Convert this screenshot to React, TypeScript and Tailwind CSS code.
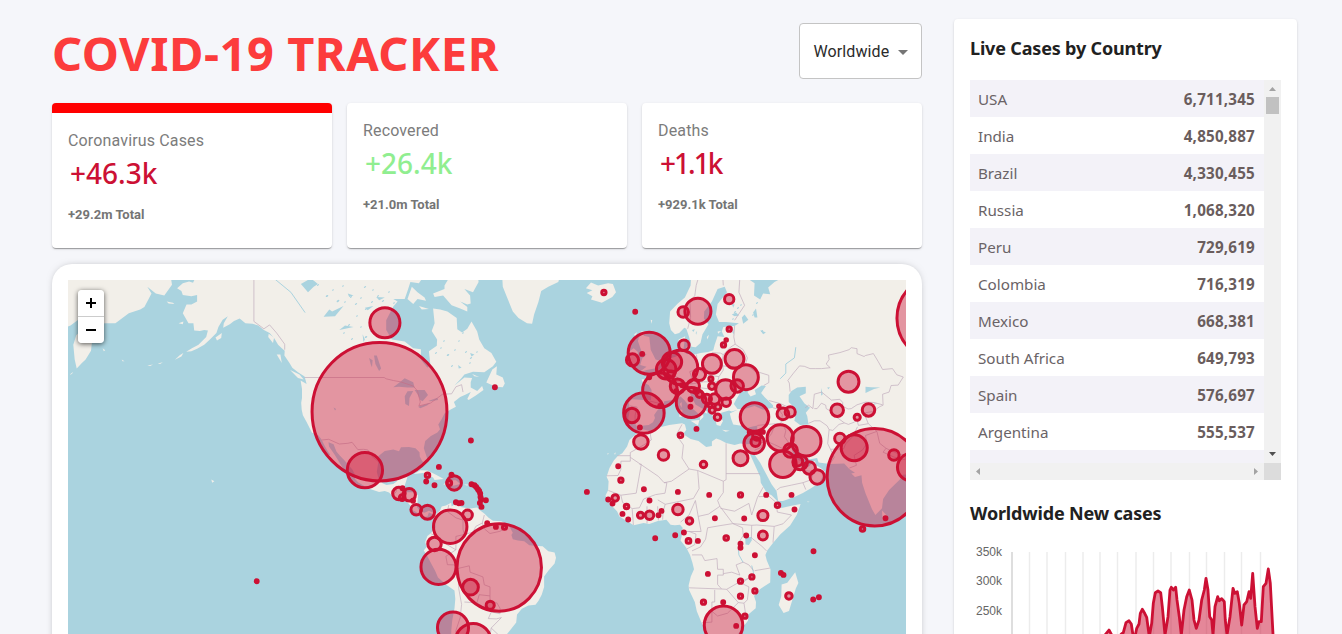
import React from "react";

type Pt = [number, number];

const project = (lng: number, lat: number): Pt => {
  const s = Math.sin((lat * Math.PI) / 180);
  return [655 + 2.8444 * lng, 537.8 - 81.49 * Math.log((1 + s) / (1 - s))];
};

const toPath = (coords: string, close = true) =>
  "M" +
  coords
    .trim()
    .split(/\s+/)
    .map((c) => {
      const [a, b] = c.split(",").map(Number);
      const [x, y] = project(a, b);
      return x.toFixed(1) + " " + y.toFixed(1);
    })
    .join("L") +
  (close ? "Z" : "");

const LAND = [
  // Americas
  "-164,69 -163.8,67.1 -161.8,66.9 -162.5,66.3 -161,66.2 -163.8,66.55 -166,66.3 -168,65.6 -166.5,65.2 -166,64.6 -163,64.4 -161,64.6 -161,63.6 -163,63.1 -164.7,63.1 -166,61.7 -165.3,61.1 -164,60 -162.3,60 -162,58.7 -160,58.6 -158.5,58.8 -157.2,58.7 -157.8,57.5 -160.5,56 -162.8,55.3 -164.8,54.6 -163,54.7 -161,55.2 -158.5,56 -156.5,57 -154.2,58.2 -153.5,59.3 -152,60.6 -150.2,61.2 -151.6,60 -151.8,59.2 -149.5,59.8 -148,60.4 -146,60.8 -144,60 -141.5,59.9 -139.5,59.6 -137.5,58.8 -135.5,58.2 -133.8,57.2 -132.5,56 -131.2,55.3 -130.2,54.8 -130.3,53.8 -128.5,52.2 -127.5,51.2 -125.5,50.2 -123.2,49.2 -122.5,47.5 -124.6,48.3 -124.1,46.3 -124.1,44 -124.4,42.8 -124.2,41 -123.8,39.5 -122.5,37.7 -121.8,36.5 -120.6,34.6 -118.4,33.9 -117.2,32.6 -116,30.5 -115,29 -114.2,28 -114.9,27.8 -113.5,26.8 -112.2,25 -110.3,23.3 -109.5,23.1 -110,24.2 -111.2,26 -112.8,28.2 -114.6,30.5 -114.8,31.8 -113,31.2 -112,29 -110.8,27.8 -109.3,26.4 -108,25 -106.4,23.3 -105.4,21.5 -105.5,20.3 -104.3,19.1 -102.2,17.9 -99.9,16.8 -97,15.9 -95,16.2 -93.5,15.7 -92.2,14.5 -90.5,13.8 -88,13.2 -87.3,12.7 -85.8,11 -85.7,9.9 -84,9 -83,8.2 -81.5,7.4 -80,7.5 -79.5,8.9 -78.3,8.3 -77.5,7 -77.3,5 -77.1,3.7 -78.8,1.6 -80,0.6 -80.8,-1.5 -80.3,-3.2 -81.3,-4.5 -80,-6.5 -78.8,-8.8 -77.3,-11.5 -76.3,-13.8 -73.5,-16.2 -70.5,-18.2 -70.2,-21 -70.5,-24 -71.3,-28 -71.6,-31 -71.7,-35 -57,-36 -58.4,-34 -54.5,-34.8 -53.5,-33.5 -51,-31 -48.8,-28.5 -48.5,-26 -46.8,-24.2 -44.5,-23.1 -42,-22.9 -40.9,-21.5 -39.8,-19.5 -39,-17 -39,-13.5 -37.5,-11.5 -35.3,-9 -34.8,-7 -35.3,-5.2 -37.5,-4.7 -39.5,-3 -41.5,-2.9 -44.2,-2.6 -46,-1.2 -48.2,-0.9 -50,-0.5 -50.5,1 -50,1.8 -51.2,4 -52.5,5 -54,5.8 -57,6 -58.5,7 -60,8.5 -61.8,9.8 -62.5,10.6 -65,10.2 -68,10.7 -70,12 -71.5,10.9 -71.6,12.2 -73.5,11.3 -75,10.9 -75.6,9.6 -76.9,8.4 -77.5,8.6 -79.5,9.5 -81,8.8 -82.5,9.2 -83.7,10.8 -83.5,12.5 -83.3,14.8 -84.5,15.8 -86.5,15.8 -88.5,15.8 -88.2,17.5 -87.5,19.5 -86.9,21.3 -88.5,21.5 -90.3,21 -90.7,19.5 -92,18.6 -94.4,18.2 -95.8,18.8 -97.3,20.8 -97.8,22.5 -97.3,25.5 -97.2,27.6 -95,29.2 -92,29.6 -90,29.1 -89.3,30.3 -86.5,30.4 -84.2,30 -82.8,28.8 -82.7,27.5 -81.8,26 -80.5,25.2 -80.1,26.8 -81.3,30 -80.8,32.2 -78.8,33.7 -76.5,34.7 -75.6,35.6 -76.2,37 -75,38.5 -74,40 -72,41 -70,41.8 -70.7,43 -68.5,44.3 -66.5,44.9 -64.8,45.5 -66,43.8 -65.5,43.5 -63,44.7 -60.3,46 -60.8,47 -62.5,45.8 -64.8,46.6 -64.8,47.9 -64.3,48.9 -67,49 -70.5,47.1 -68,48.9 -67,49.7 -64,50.3 -60,50.2 -57,51.5 -55.8,52.5 -57.5,54.3 -60,55.3 -61.8,57 -62.5,58.5 -64.5,60.3 -66,59 -67.8,58.3 -69.5,58.9 -69.7,60.9 -73,62 -75.5,62.3 -78,62.5 -77.5,60 -78.5,58.6 -76.6,57 -76.7,55.8 -79.5,54.7 -79,52 -80,51.2 -82.3,53 -82.3,55.1 -85,55.3 -88,56.6 -92.5,57 -94.5,58.8 -94.5,60.5 -92,62.8 -90.5,63.6 -92,64 -88,64 -87,65.2 -86,66.5 -83,66.3 -81.5,67.2 -82,69",
  "-73,69 -72.5,67 -74,66 -74,65.5 -78,64.8 -77.5,64.3 -74.5,64.5 -71.5,63 -68.5,62.5 -66,62 -66,62.7 -68.5,63.6 -66,63.1 -64.8,63.3 -65,64.5 -67,65.5 -64,65 -62,66.5 -63,69",
  "-87,64 -85.5,65.8 -83.5,65 -81,64.2 -80.5,63.7 -83.5,64 -85,63.2",
  "-79.5,62.4 -83,62.9 -82,62.3",
  "-54,69 -53.7,67 -53.5,65.8 -52,64.2 -50,62 -48,60.9 -45,60 -43.2,59.9 -42.5,61.5 -41,63.5 -40,65.2 -37.5,65.8 -34,66.5 -32,69",
  "-22.5,63.9 -18.7,63.4 -15,64.3 -13.7,65 -14.8,66.2 -16.5,66.3 -20,66 -22.5,66.4 -24.3,65.6 -22,65.3 -24,64.9 -22,64.4",
  "-59.3,47.8 -56,46.8 -53.5,46.7 -52.8,47.6 -53.5,49 -55.8,49.7 -55.6,51.5 -57.2,50.8",
  "-64.3,49.8 -61.8,49.1 -63.5,49.3",
  "-84.8,21.9 -82.5,23.1 -80,23 -77,21.6 -74.3,20.2 -77.5,19.9 -78,20.7 -81.5,22.2",
  "-74.4,18.4 -72.7,19.8 -70,19.8 -68.4,18.6 -71,18",
  "-78.3,18.4 -76.3,18.1 -77.2,17.8",
  "-67.2,18.4 -65.7,18.4 -66,18",
  "-128.3,50.7 -125,49.7 -123.5,48.5 -125.5,48.9",
  "-133,54 -131.7,54 -131.2,52.2",
  "-135.8,58.1 -133.9,57.4 -134.3,56.3 -136,57.5",
  "-154.5,57.4 -152.3,58.2 -152.5,57.3 -154,56.8",
  "-167.5,60 -165.8,60.3 -166,59.8",
  "-171.7,63.6 -169.5,63.4 -169,63.2 -171,63.3",
  "-167,53.9 -165.8,54.3 -166.5,53.6 -168.8,52.9",
  "-174.8,52.1 -173,52.4 -174,52",
  "-178.5,51.7 -176.5,51.9 -177.5,51.6",
  "-187.5,53 -186.5,52.6 -187.2,52.6",
  "-194.2,55.3 -193.3,54.9 -193.8,54.7",
  "-156,20.1 -154.9,19.5 -155.7,19",
  // Eastern Siberia
  "-171,69 -169.8,66.1 -172.5,64.5 -175.5,64.8 -178.5,65.8 -177,64.8 -179.5,62.7 -181,62.3 -185,61.7 -189.7,60 -193,60 -195.8,59.9 -197,58.2 -196.5,57.8 -198,56.2 -198.3,54.8 -200.2,53 -201.5,52.2 -203.3,51 -204,53 -204.5,56 -203.5,57.8 -200,59.5 -197,61.2 -200,61.4 -203,60.5 -205.5,59.6 -208,59 -208,69",
  "-204.5,50.3 -205.8,49.6 -205,49.8",
  // Eurasia and Africa
  "13,69 12.5,66 10.5,64.2 8,63.3 5.3,62 5,60 5.6,58.8 7,58 8.5,58.2 10.3,59.2 11,59 12,57.5 12.8,55.6 14.3,55.5 16,56.3 16.7,58 18.8,59.8 17.2,60.8 17.3,62 20,63.6 22,65.5 24.5,65.8 25.3,65 22,63.2 21.4,61.5 22.5,60.2 25,60.2 29.5,60 28,59.5 24,59.3 23.5,58.5 24.4,57.5 22,57.6 21,56 20.5,54.9 18.7,54.5 16,54.3 14,54 11,54.1 10,55 10.6,57.6 8.3,57 8.3,55 8.7,53.9 7,53.5 5,53.2 4,51.8 1.7,50.9 0.2,49.6 -1.3,49.6 -1.5,48.7 -4.7,48.5 -4.3,47.9 -2.2,47.2 -1.2,46 -1.4,43.5 -4,43.5 -8,43.7 -9.2,43 -8.8,41 -9.4,38.8 -8.8,37.1 -7,37.1 -6,36.2 -5.4,36.1 -4,36.7 -2.2,36.8 -0.7,37.6 0,38.8 -0.3,39.6 1,41 3.1,42 3.2,43.2 5,43.4 7.5,43.8 9,44.4 10.3,43.5 12,42 14,40.8 16,39.4 15.7,38 17,39 16.8,40.5 18.4,39.9 18.3,40.5 16,41.6 14.2,42.4 13.3,43.7 12.3,45.2 13.7,45.5 14,45 15.3,44.3 18.4,42.4 19.5,41.3 19.4,40.3 21.2,38.3 21.7,36.8 23,36.5 23.9,37.9 22.8,39.3 23.3,40.2 26,40.8 27,40.5 29,41 26.3,40 26.8,38.5 27.5,37 30.5,36.6 32.5,36 34,36.3 36,36.7 35.8,35 35,33 34.3,31.3 32,31.2 30,31.4 28,31 25,31.6 23,32.5 21.5,32.9 20,32 20,30.7 18,30.4 15.3,32.2 12.5,32.8 10.5,33.9 10.2,34.5 11,35.5 10.5,37 9.5,37.3 5,36.8 0,35.8 -2,35.1 -5.3,35.8 -6.5,34.3 -9,32.5 -9.8,30.5 -11.5,28.5 -13,27.7 -14.5,26.2 -16,23.8 -17,21 -16.3,19.5 -16.5,16.5 -17.4,14.7 -16.7,13 -15,11 -13.3,9.2 -12.5,7.5 -9.5,5.6 -7.5,4.4 -4,5.2 -2,4.8 1,5.9 4,6.3 5.5,4.6 7,4.4 8.8,4.6 9.7,3.5 9.5,1 9,-1 11,-3.5 12.3,-6 13.2,-8.8 13.7,-11 12.6,-13.5 11.8,-16.5 12,-18 14,-22 14.7,-25 16.4,-28.6 18.2,-32 18.4,-34.3 20,-34.8 25,-34 28.5,-32.8 31,-29.8 32.7,-28 32.8,-26 35.4,-24 35.5,-22 34.8,-20 37,-17.7 40.5,-15.5 40.6,-11 39.3,-8 38.8,-6 39.5,-4.4 41.5,-1.8 44,1.2 47.5,4.3 49.8,8 51.2,11.8 48,11.2 44.5,10.4 43,11.6 43.2,12.6 41,14.8 39.3,15.6 37.2,19 37,21 35.5,24 34,27 32.5,29.9 34.2,27.8 34.9,29.4 35,28 37,25.5 39,22 41,18.5 42.7,16.2 43.3,12.8 45,12.8 49,14.2 52,15.6 55,17.2 57.8,19 59.8,22.5 58.5,23.7 56.5,24.8 56.3,26.2 54,24.2 51.5,24.2 51.3,26 50,26.5 48.5,28.5 48,30 50,30.2 51.5,27.9 54.5,26.6 57,27 57.5,25.6 61.5,25.1 66.5,25.3 68.3,23.5 70.3,22.3 69,22 70.3,20.9 72.6,21.5 72.8,19 74,15.5 76.3,10 77.5,8 79.8,10.3 80.2,13.5 82.3,16.6 86,20 87.2,21.6 89,21.8 92,22 92,69",
  "-5.7,50.1 -3,50.7 1.3,51.2 1.7,52.7 0.2,53 -1.5,55 -2,57.5 -4,57.7 -3.2,58.6 -5,58.5 -6,56.7 -4.8,54.8 -3,54 -4.5,53.2 -5.2,51.8 -3,51.4",
  "-10,51.6 -6.3,52.2 -6,54.5 -7.5,55.3 -10,54.2 -9,53",
  "-7.3,58 -6.2,58.4 -7,57.6",
  "-1.5,60.6 -1,60.5 -1.2,59.9",
  "11,55.6 12.5,56 12.3,55 11.2,55.2",
  "18.2,57.5 19,57.9 18.5,57",
  "22,58.5 23.2,58.6 22.2,58.1",
  "8.3,41 9.6,41 9.6,39.2 8.6,39",
  "8.7,42.5 9.4,43 9.4,41.5",
  "12.5,38 15.6,38.2 15.1,36.7",
  "23.6,35.5 26.3,35.2 24.8,34.9",
  "32.3,35 34.5,35.6 33.7,34.7",
  "2.5,39.7 3.4,39.7 3,39.3",
  "79.8,9.6 81.8,7.5 81.2,6.2 80,6.2",
  "49.3,-12 50.4,-15.7 49.5,-17.5 47.1,-24.9 45.2,-25.5 43.5,-23 44.4,-20 44.5,-16.2 46.5,-15.6",
  "53.4,12.7 54.4,12.6 53.8,12.4",
  "-14.4,28.2 -13.8,28.8 -14,28.1",
  "-16.8,28.4 -16.2,28.5 -16.6,28",
];

const WATER = [
  "-92,46.7 -89.5,48 -88,48.8 -85,47.9 -84.5,46.6 -87,46.6 -90,46.8",
  "-87.8,42.5 -86.5,42 -86.3,44 -85,45.8 -87,45.7 -88,44.5",
  "-84.5,46 -81,46 -79.8,44.8 -81.7,43.2 -82.5,43.5 -83.5,45",
  "-83.3,41.8 -79,42.8 -80,42.2 -82.5,41.4",
  "-79.7,43.3 -76.5,44.1 -76.3,43.5 -79,43.2",
  "-98.8,53.8 -97.8,53.8 -96.3,51 -97,50.5 -98.3,52",
  "-100.5,53.3 -99.3,52.8 -99.5,51.3 -100,52",
  "-116.5,61.1 -114.5,62.3 -113.5,62 -109.5,62.9 -112.5,61.2",
  "-124.5,66.2 -121,67 -118.5,66.2 -120,65.8 -122,65",
  "-111,58.8 -106,59.3 -109,59.6",
  "-102.8,58 -102,57 -102.5,56.5",
  "-102,62.6 -99,62.9 -101,62.2",
  "-98,64.3 -95,64.2 -97,63.8",
  "-108,64.8 -106,64.5 -107.5,64.3",
  "-65,54.3 -63.5,54 -64.5,53.6",
  "-69.2,51.8 -68,51.2 -69,51",
  "-113,41.6 -112.1,41.2 -112.5,40.8",
  "27.7,42.5 28.6,43.7 29.7,45.1 31,46.6 33,46 32.6,45.4 33.6,44.4 35.5,45 35,46 37.5,47.1 39,47 37.3,45.3 38.5,44.3 41.5,42.2 41.5,41.5 38,41 35,42 31.3,41.2 29,41.2",
  "47,44.8 47,43 48.7,41.8 49.5,40.3 49,38 51,36.8 54,37 53.5,39.3 53,40.2 54.5,41.5 52.5,42.7 50.8,44.5 53,45.2 53,46.8 50,46.6 48,45.8",
  "33,67.5 32.5,67 35,66.3 34.8,64.5 37,63.9 38,64.8 40.5,64.7 39.8,65.7 42,66.5 44.5,67 44,68",
  "30.5,61 31.5,61.5 32.8,60.6 31,59.9",
  "34.5,61.8 35.5,62.5 36,61 35,61",
  "27.5,59 27.8,58 27.2,58.3",
  "37,58.8 39,58.3 38,58",
  "74,46.8 76,46.7 79.2,46.6 77,46.3 74,45.3",
  "58.4,46.5 59,45 58.4,44.6",
  "60.5,46.6 61.5,46.7 61,46.2",
  "31.7,0.2 34,0.3 34,-1 33,-2.5 31.8,-2.4",
  "77,42.6 78.2,42.6 77,42.3",
  "13,58.8 14,58.9 13.5,58.4",
  "14.3,58.2 14.8,58.6 14.5,57.9",
  "27,61.5 28.5,61.8 29.5,61.3 28,61.2",
  "27,63.2 28,63.1 27.5,62.6",
  "81,69 83,66.8 84,66.8 82,69",
];

// Small lakes: x, y, radius
const LAKES = `314,283,1.2 318,285,.9 327,296,1.1 333,290,.8 338,301,1.2 345,302,.8 351,297,.9 356,304,1 361,298,.8 366,309,1
372,302,.9 357,316,.8 349,325,1 344,333,.8 352,339,.9 366,337,1.1 371,331,.8 361,327,.7 378,296,.9 383,301,1 389,292,.8 394,303,.8
365,287,1 373,290,.7 343,286,.8 436,353,.9 441,348,.7 448,355,1.1 455,350,.8 459,341,.7 466,352,.9 471,358,1 463,333,.8 470,363,.8
452,366,.9 444,341,.8 477,352,.7 716,299,.9 735,312,1 738,308,.9 733,319,.8 741,305,.8 757,303,.9 762,331,1 753,315,.8`
  .trim()
  .split(/\s+/)
  .map((s) => s.split(",").map(Number));

const RIVERS = [
  "29.3,-3.5 29.5,-6 31,-8.7",
  "34,-9.7 34.6,-12 35,-14.3",
  "44,48.7 46,50 46,52 49,53.3 49.5,55.5",
  "-134,67 -128,65 -123,61.8",
];

const BORDERS = [
  "-141,69 -141,60.3 -137.5,59 -135.5,59.7 -133,58.2 -130.2,56.1 -130.2,55",
  "-123.2,49 -95.2,49 -94.5,48.7 -92,48.3 -89.5,48 -85,47 -83.5,45.8 -82.5,43 -83,42 -79,42.7 -76.5,44 -74.7,45 -71.5,45.1 -70,46.8 -68,47.3 -67.5,45.5",
  "-117.1,32.5 -114.7,32.7 -111,31.3 -108,31.5 -106.5,31.8 -104.5,29.6 -102.5,29.7 -101,29.5 -99.5,27.5 -97.3,25.9",
  "-92.2,14.6 -91,16 -91,17.8 -89.2,17.8",
  "-72.5,11.5 -73,9.2 -70,7 -67.5,6.2 -67.5,3 -67,1.2 -70,0.5 -70,-4.2 -73,-2.5 -75.5,0 -78.7,1.4",
  "-67,1.2 -64,2 -63,4 -60.7,5.2 -60,8",
  "-60.7,5.2 -59.8,3 -58,1.5 -54.5,2.3 -51.6,4",
  "-70,-4.2 -73.5,-6.5 -73,-9.4 -70.5,-9.5 -69.5,-11 -68.8,-13 -69,-17.5 -68,-22.8 -68.5,-27 -70,-31 -70,-35",
  "-70.5,-11 -65.3,-9.8 -65,-12 -60.5,-13.6 -60,-16.3 -58,-17 -58,-20 -61.8,-19.6 -62.6,-22.3 -67,-22",
  "-58,-20 -58,-22 -55.6,-22.3 -54.5,-24 -54.5,-25.8 -57.5,-25.2 -62.6,-22.3",
  "-57.6,-25.3 -58.6,-27.3 -55.8,-27.4 -54,-27 -57.6,-30.2 -58.2,-33.5",
  "-57.6,-30.2 -53.5,-33.5",
  "-13.2,27.7 -8.7,27.7 -8.7,26 -12,26 -12,23.4 -13,21.4 -17,21.3",
  "-8.7,27.7 -8.7,28.7 -4,31 -1.3,32.5 -1.8,35",
  "-8.7,27.2 1.2,21.1 3.2,19 5.8,19.5 12,23.5 15,23 24,19.5 25,20 25,31.5",
  "9.5,37 7.5,34 10,31 9.5,27 12,23.5",
  "-5.5,25 -4.8,25 -6.6,15.5 -12,14.8 -16.4,16.4",
  "3.2,19 4.2,19 3.5,15.5 0.2,15 -4,13.5 -5.5,10.5 -8,10.2 -11.4,12.3 -12,14.8",
  "15,23 15.5,17 13.5,13.7 3.6,11.7 1,13.2",
  "3.6,11.7 2.8,9 2.7,6.4",
  "0.9,11 1.2,6.1",
  "-2.8,11 -2.8,5.1",
  "-8,10 -7.6,4.5",
  "14.2,13 15.2,7.5 18.8,8.3 22.8,11 22,13 24,15.7 24,19.5",
  "14.2,13 12,8 9,5.5",
  "15.2,7.5 16.2,2.2 10,2.2",
  "18.5,3.5 22.5,4.2 27.4,5 30.8,3.5 31,0.8 29.6,-1.4 29.3,-4.4",
  "25,22 37,22",
  "22.8,11 27.4,5 34,4.4 35.8,4.5 41.9,4 45,4.9 48,8 43,9 42.8,11",
  "23,10.3 28,9.3 33,12 34,8 36,14 38,17.5",
  "36.5,14.3 40,14.5 42.4,12.5",
  "34,4.4 33.9,0 37.6,-3 39.2,-4.6",
  "41.9,4 41.5,-1.7",
  "13,-6 16.5,-6 17.5,-8 21.8,-7.3 22,-11 24,-11 24,-13 22,-13 22,-16.2 23.4,-17.7 12,-17.3",
  "24,-12.5 27,-12 29.8,-13 28.5,-9.5 31,-8.5 33,-9.5 34.7,-11.5",
  "23.4,-17.7 25.2,-17.8 28.9,-15.8 33,-14 30.4,-15.8 33,-17 32.5,-21.3 31.3,-22.4 29.3,-22.2 25.2,-17.8",
  "35,-11.5 40.4,-10.6",
  "21,-18 21,-22 20,-22 20,-28.4 16.5,-28.6",
  "20,-25 22,-26.5 25.5,-25.6 29.3,-22.2",
  "31.3,-22.4 32,-26.8 32.8,-26.8",
  "12,2.2 14.4,1.3 14,-2.4 11.2,-3.9",
  "18.5,3.5 17.8,-0.5 16,-3.2 13,-4.6",
  "6.2,49.5 8,49 7.6,47.6 10,47.5 13,47.5 13,48.8 12.2,50.3 15,51 14.6,54",
  "15,51 18.5,49.5 22.5,49.2 24,50.7 23.6,52.6 24,54 23,54.3 20,54.4",
  "22.5,49.2 22,48 26.5,48.2 28.2,45.5",
  "13,47.5 17,48 22,48 20.2,46.2 16.5,46.5 13.8,46.5",
  "26.6,48.3 30,46.4",
  "23.6,51.6 30.5,51.3 31.8,52 35,50.5 40,49.5 40,47.8 38.2,47.1",
  "31.8,52 32.5,53.3 31,55 28.2,56.1 27.7,57.5 28,59.5",
  "24,54 26.5,55.5 28.2,56.1",
  "28,60.5 31.5,63 29.5,65 30,68",
  "24,66 23.7,68",
  "11.5,59 12.5,61 12.3,63.5 14,64.5 14.5,66 16,68",
  "40,43.4 44,42.6 46.5,41.8 48.5,41.8",
  "41.5,41.5 43.5,41.1 46.5,41.3",
  "43.5,41.1 44.8,39.7 44.3,37.3 42.3,37.2 36,36.7",
  "44.8,37.3 46,35.2 45.5,33.5 48,30.5",
  "42.3,37.2 41,34.4 39,32.2 36,32.5",
  "39,32.2 42,31.1 47,29 48.3,28.5",
  "35,29.4 37.5,30.3 37,31.5 39,32.1",
  "42.8,16.5 44,17.4 48,18.2 52,19 53,16.7",
  "52,19 55,20 55.5,22.7 52,23 51.5,24.2",
  "47.5,45.6 47.2,47.7 46.7,48.3 48.7,50 50.8,51.6 52.5,51.5 54.5,51 56.5,51 58.6,51 61.6,51.2 60.2,52 61.2,53 61,53.9 65,54.4 68.2,55 69,55.4 71,55.2 71,54.2 73.5,53.6 74,53.8 76.8,54.2 78.5,52.5 80,50.8 83.5,51 85,49.6 87.3,49.1 85.5,47.2 83,47.1 82.3,45.5 80,45 80.2,42.2 79,41.8 76.5,40.5 74,40.2 73.5,39.4",
  "52.8,41.5 54,42.2 55.5,41.3 56,45 58.6,45.5 62,43.5 65,43.7 66,42.9 66,41.9 67.9,41.2 69,41.3 71,42.3 74,43 77,42.9 80,42.3",
  "56,41.3 57,41.3 58.5,42.7 60,42.2 60.2,41.3 62,40.5 64,38.9 66.6,37.4 64.7,37 62.5,35.3 61.2,35.5 60.5,36.6 58,38 56,38 54,37.3",
  "66.6,37.4 68,37 70,37.6 71,38.3 71.5,36.7 75,37.2 73.8,39.5",
  "61.2,35.5 60.7,31.4 61.7,29.7 66.3,29.8 67,31.3 69.5,33.5 71.2,36.3",
  "61.7,29.7 63,27.2 61.6,25.2",
  "75,37.2 78,35 74,33.8 74.5,31.5 73,29.5 70,27.8 70.8,24.7 68.3,23.8",
  "78,35 79,31.5 81.2,30 85.5,28.3 88,27.9 88,26.4 84,27.3 80.2,28.8 81.2,30",
  "88.3,26.2 88.5,24 89,21.8",
  "-2,43.3 3,42.4",
  "-7,37.2 -7,39.5 -6.3,41.7 -8.8,42",
];

// x, y, horizontal radius, optional vertical radius
const CIRCLES = `
379.3,411.5,67.2,69 874.5,477,47.3,48.5 384.7,322.5,14.8 364.7,470,17.4 499,567.3,42,43.4 450,526.5,16.5 438.3,566.7,17.3
434.3,543.7,6.5 467.3,514.7,4.6 470.3,587,7.6 490,605,3.8 452.8,627.4,15.3 473,641,17.5 427.3,512,6.8 416,509.5,5
398.7,493.3,6 409,494.5,6 402,497.5,2.6 412.8,500.5,1.2 402.3,488,1.2 454,482.7,7 449,482.8,2.2 451.3,474.5,1.2 427.3,475,2
438.7,466.7,1.2 426,481.3,1.2 434.3,485,1.2 471.3,484,1.2 474.3,485,1.2 476,486.7,1.2 477.7,489,1.2 479,490.7,1.2 480,493.3,1.2
480.3,496.7,1.2 481,499.3,1.2 485.7,500,1.2 479.7,502.7,1.2 481.3,506.7,1.2 455.7,502,1.2 458.7,503,1.2 461.3,502.7,1.2
487,523,1.2 495.7,526.7,1.2 504.3,527,1.8 470.7,440.3,1.2 494.7,387,1.2 603.7,292.3,1.9 635,311.5,1.2 256.5,581,1.2
697.7,311,12.8 683,311.7,5 683.7,345,5 649,353,20.8 642,353.7,1.2 632.3,359.7,5.8 671.7,361.7,9.5 666,369,9.5 680.3,367.3,17
670.7,374.3,3.2 659.7,390,17 677.3,386,7 693,385.7,6 699.3,374.3,5.8 711.7,363.7,9.2 691,402.3,14.7 690.3,399,1.2 690.3,406.5,1.2
643.7,412.7,20 631.7,415.3,7 639.7,427.3,1.2 660,405.7,1.2 640.7,441.7,7 680.3,435,2 696.3,428.7,1.2 649,377,1.2 676,391,1.2 682,385,1.2
710.7,378.7,1.8 711.7,386,3 725.3,389.3,9.6 737,385.7,6 745.7,377,12.2 734.3,358.7,9.2 729,329,1.9 726,339.7,1 723.3,344.7,1.9
729,299,4.4 726,402,4 714.3,398.7,5 717.7,406.7,2.7 710,405,1.8 712,410,2.7 717.3,417,3 706.7,398.7,4.3 699.3,394,3 696,391,2
754.3,416.7,14 782.7,413.7,5.6 790,411.7,4.8 778.7,406,1 780,437.7,12.8 806,441,14.5 754,443,10 755.3,441.7,4.3 756.7,435.7,4
762.7,431.7,1.2 749.5,432,1.2 740.3,458,7.2 790.3,450.3,6.6 848.3,381.5,10.2 837,410,6 868.3,409.7,6 857,417,2.8 839.7,438.3,5
854,447.5,12.8 893.7,454.7,5 911,467,13.5 940,318,43 782.7,464,13 800,462.3,7 797.7,461,4.5 809,467.7,6 817,476.7,7
885.3,518,1.2 862.3,528.7,2 791.3,494.7,1.2 777.3,505,2 766,494.7,1.2 794.3,509.3,1.2 762.7,515.3,4.8 762.7,535.3,4.2
740.3,494.7,1.9 744,518.3,1.2 746,535.3,1.2 740.3,543.5,1.2 740.3,547.5,1.2 754.7,555,1.2 751.7,576.7,1.9 754.7,590.7,1.9
740.3,581,1.9 740.3,596,1.9 780.7,572.7,1.2 783.3,574.7,1.2 788.7,595.7,3 818.7,597,1.2 813,599.3,1.2 813.3,551,1.2 744.7,616,1.9
736,625.7,1.2 723.3,625,19 663.3,454.7,5 618,466,1.2 620.7,480,1.9 703.3,464.3,3 643.7,489,1.2 677.7,491.7,1.2 709,494.7,1.2
586.7,491.7,1.2 615,497.7,3 608,499.3,1.2 612.3,503.3,1.2 626.3,506.3,2 622.3,513.7,1.2 628,519.3,1.2 640.3,515,2.8 649.3,515,4
658.3,515,1.2 661.3,510.7,1.2 649.3,500.3,1.2 677.7,509.3,5 689.3,520.7,3 714.7,518,1.2 683.7,532.3,1.2 675,535,1.2 688.3,540.7,2.1
697.7,540.7,1.2 726,537.7,2 655,538,1.2 707.7,573.7,1.2 703.3,602,1.9 723,602,1.2
`
  .trim()
  .split(/\s+/)
  .map((c) => c.split(",").map(Number));

function WorldMap() {
  return (
    <svg viewBox="68 280 838 354" className="block h-[354px] w-[838px]">
      <rect x="68" y="280" width="838" height="354" fill="#aad3df" />
      {LAND.map((d, i) => (
        <path key={i} d={toPath(d)} fill="#f2efe9" />
      ))}
      {WATER.map((d, i) => (
        <path key={i} d={toPath(d)} fill="#aad3df" />
      ))}
      {LAKES.map(([x, y, r], i) => (
        <ellipse key={i} cx={x} cy={y} rx={r * 1.3} ry={r * 0.7} fill="#aad3df" transform={`rotate(-35 ${x} ${y})`} />
      ))}
      {RIVERS.map((d, i) => (
        <path key={i} d={toPath(d, false)} fill="none" stroke="#aad3df" strokeWidth="1" />
      ))}
      {BORDERS.map((d, i) => (
        <path key={i} d={toPath(d, false)} fill="none" stroke="#c2aebd" strokeWidth="0.7" strokeLinejoin="round" />
      ))}
      {CIRCLES.map(([x, y, rx, ry], i) => (
        <ellipse
          key={i}
          cx={x + 0.2}
          cy={y + 0.2}
          rx={rx + 0.25}
          ry={(ry ?? rx) + 0.25}
          fill="#cc1034"
          fillOpacity="0.4"
          stroke="#cc1034"
          strokeWidth="3"
        />
      ))}
    </svg>
  );
}

const SERIES =
  "495,645 507,630 515,645 525,662 545,641 550,638 558,608 567,602 574,612 582,665 590,625 597,612 601,580 607,568 614,580 620,592 628,650 635,610 640,550 646,518 654,513 662,518 667,560 675,645 684,590 690,510 694,502 700,510 707,502 711,540 718,590 724,645 732,570 740,530 748,510 756,540 762,600 769,625 777,600 785,540 793,510 798,475 804,510 809,590 815,600 819,645 825,560 833,530 838,542 845,536 853,545 856,600 861,645 870,590 879,505 884,520 892,515 898,550 905,615 912,555 920,545 927,515 932,535 938,460 945,560 952,625 957,605 964,605 970,500 978,490 985,447 991,490 1000,660"
    .split(" ")
    .map((p) => p.split(",").map(Number))
    .map(([x, y]) => `${(940 + x / 3).toFixed(1)} ${(420 + (y - (y > 600 ? 0 : 0)) / 3).toFixed(1)}`);

const GRID = [1029.5, 1047, 1065.5, 1083, 1100, 1117.5, 1136, 1153.5, 1171, 1189.5, 1206.5, 1224.5, 1241.5, 1260.5];

function CasesChart() {
  return (
    <svg viewBox="970 540 311 94" className="block h-[94px] w-[311px]">
      {GRID.map((x) => (
        <path key={x} d={`M${x} 552V640`} stroke="#ececec" strokeWidth="1.5" />
      ))}
      <path d="M1012 552V640" stroke="#dedede" strokeWidth="2" />
      <path d={`M${SERIES.join("L")}V660H1105Z`} fill="#cc1034" fillOpacity="0.5" />
      <path d={`M${SERIES.join("L")}`} fill="none" stroke="#cc1034" strokeWidth="2.8" strokeLinejoin="round" />
      <g fill="#666" fontSize="12" textAnchor="end" className="font-['Liberation_Sans',sans-serif]">
        <text x="1002" y="555.5">350k</text>
        <text x="1002" y="585">300k</text>
        <text x="1002" y="614.5">250k</text>
      </g>
    </svg>
  );
}

type InfoProps = { title: string; value: string; total: string; tone: string; active?: boolean };

function InfoBox({ title, value, total, tone, active }: InfoProps) {
  return (
    <div
      className={`h-[145px] w-[280px] overflow-hidden rounded bg-white shadow-[0_2px_1px_-1px_rgba(0,0,0,0.2),0_1px_1px_0_rgba(0,0,0,0.14),0_1px_3px_0_rgba(0,0,0,0.12)] ${
        active ? "border-t-[10px] border-[#ff0000]" : ""
      }`}
    >
      <div className="p-4">
        <div className="font-['Roboto',sans-serif] text-base leading-6 tracking-[0.15px] text-[#7c7c7c]">{title}</div>
        <div className={`mt-0.5 pl-0.5 text-[28px] leading-9 font-medium ${tone}`}>{value}</div>
        <div className="mt-3.5 font-['Roboto',sans-serif] text-[13px] leading-5 font-bold text-[#757575]">{total}</div>
      </div>
    </div>
  );
}

const COUNTRIES: [string, string][] = [
  ["USA", "6,711,345"],
  ["India", "4,850,887"],
  ["Brazil", "4,330,455"],
  ["Russia", "1,068,320"],
  ["Peru", "729,619"],
  ["Colombia", "716,319"],
  ["Mexico", "668,381"],
  ["South Africa", "649,793"],
  ["Spain", "576,697"],
  ["Argentina", "555,537"],
  ["", ""],
];

function CountryTable() {
  return (
    <div className="mt-[18px] grid h-[400px] w-[311px] grid-cols-[294px_17px] grid-rows-[383px_17px] overflow-hidden">
      <div className="overflow-hidden">
        {COUNTRIES.map(([name, count], i) => (
          <div
            key={i}
            className={`flex h-[37px] items-center justify-between pt-0.5 pr-[9px] pl-2 text-[15.2px] text-[#6a6366] ${
              i % 2 === 0 ? "bg-[#f3f2f8]" : "bg-white"
            }`}
          >
            <span>{name}</span>
            <span className="text-[15.2px] font-bold tracking-[0.2px] text-[#6a5d5d]">{count}</span>
          </div>
        ))}
      </div>
      <div className="flex flex-col items-center justify-between bg-[#f1f1f1]">
        <div className="flex flex-col items-center">
          <svg className="h-[17px] w-[17px]" viewBox="0 0 17 17">
            <path d="M5 11L8.5 7L12 11Z" fill="#a3a3a3" />
          </svg>
          <div className="h-[17px] w-[13px] bg-[#c1c1c1]" />
        </div>
        <svg className="h-[17px] w-[17px]" viewBox="0 0 17 17">
          <path d="M5 6L8.5 10L12 6Z" fill="#505050" />
        </svg>
      </div>
      <div className="flex items-center justify-between bg-[#f1f1f1]">
        <svg className="h-[17px] w-[17px]" viewBox="0 0 17 17">
          <path d="M10 5L6 8.5L10 12Z" fill="#a3a3a3" />
        </svg>
        <svg className="h-[17px] w-[17px]" viewBox="0 0 17 17">
          <path d="M7 5L11 8.5L7 12Z" fill="#a3a3a3" />
        </svg>
      </div>
      <div className="bg-[#dcdcdc]" />
    </div>
  );
}

export default function App() {
  return (
    <div className="flex h-[634px] w-[1342px] gap-8 overflow-hidden bg-[#f5f6fa] pl-[52px] font-['Noto_Sans',sans-serif]">
      <main className="w-[870px]">
        <header className="mt-[23px] flex h-14 items-center justify-between">
          <h1 className="pt-1 text-[47px] leading-none font-bold tracking-[0.55px] whitespace-nowrap text-[#fc3c3c]">
            COVID-19 TRACKER
          </h1>
          <button className="flex h-14 w-[123px] items-center justify-between rounded border border-[#c4c4c4] bg-white pt-0.5 pr-[13px] pl-[13.5px] font-['Roboto',sans-serif] text-base tracking-[0.1px] text-[#2b2b2b]">
            Worldwide
            <svg className="h-[5px] w-2.5" viewBox="0 0 10 5">
              <path d="M0 0H10L5 5Z" fill="#757575" />
            </svg>
          </button>
        </header>
        <section className="mt-6 flex justify-between">
          <InfoBox title="Coronavirus Cases" value="+46.3k" total="+29.2m Total" tone="text-[#cc1034]" active />
          <InfoBox title="Recovered" value="+26.4k" total="+21.0m Total" tone="text-[#90ee90]" />
          <InfoBox title="Deaths" value="+1.1k" total="+929.1k Total" tone="text-[#cc1034] tracking-[-2px]" />
        </section>
        <section className="relative mt-4 h-[500px] rounded-[20px] bg-white p-4 shadow-[0_0_8px_-4px_rgba(0,0,0,0.5)]">
          <WorldMap />
          <div className="absolute top-[26px] left-[26px] w-[26px] overflow-hidden rounded shadow-[0_1px_5px_rgba(0,0,0,0.65)]">
            <div className="flex h-[27px] items-center justify-center border-b border-[#ccc] bg-white">
              <svg className="h-3 w-3" viewBox="0 0 12 12">
                <path d="M1 6H11M6 1V11" stroke="#000" strokeWidth="2" />
              </svg>
            </div>
            <div className="flex h-[26px] items-center justify-center bg-white">
              <svg className="h-3 w-3" viewBox="0 0 12 12">
                <path d="M1 6H11" stroke="#000" strokeWidth="2" />
              </svg>
            </div>
          </div>
        </section>
      </main>
      <aside className="mt-[19px] h-[700px] w-[343px] rounded bg-white p-4 shadow-[0_2px_1px_-1px_rgba(0,0,0,0.2),0_1px_1px_0_rgba(0,0,0,0.14),0_1px_3px_0_rgba(0,0,0,0.12)]">
        <h3 className="h-[27px] text-lg leading-[27px] font-bold tracking-[-0.17px] whitespace-nowrap text-[#212121]">
          Live Cases by Country
        </h3>
        <CountryTable />
        <h3 className="mt-5 h-[27px] text-lg leading-[27px] font-bold tracking-[-0.17px] whitespace-nowrap text-[#212121]">
          Worldwide New cases
        </h3>
        <div className="mt-[13px]">
          <CasesChart />
        </div>
      </aside>
    </div>
  );
}
